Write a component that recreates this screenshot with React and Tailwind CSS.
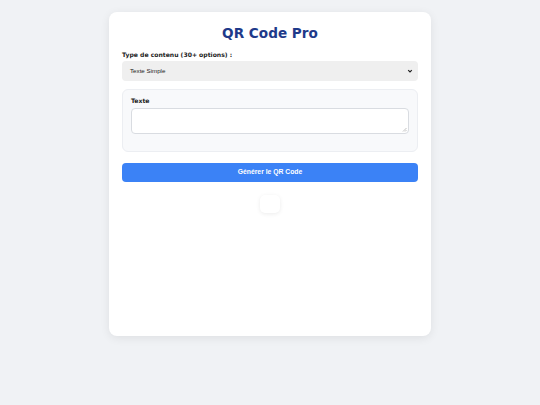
export default function App() {
  return (
    <div className="min-h-[405px] w-full bg-[#f0f2f5] pt-[12px]">
      <div className="mx-auto w-[322px] h-[324px] rounded-[8px] bg-white px-[13px] pt-[11px] shadow-[0_2px_10px_rgba(0,0,0,0.08)]">
        <h1 className="text-center text-[13.6px] leading-[21px] font-bold text-[#1e3a8a] font-['DejaVu_Sans',sans-serif]">QR Code Pro</h1>
        <div className="mt-[6px] text-[6.1px] leading-[9px] font-bold text-[#222] font-['DejaVu_Sans',sans-serif]">Type de contenu (30+ options) :</div>
        <div className="mt-[2px] flex h-[20px] items-center justify-between rounded-[4px] bg-[#efefef] pl-[8px] pr-[5px] text-[6.2px] text-[#222] font-['Liberation_Sans',sans-serif]">
          <span>Texte Simple</span>
          <svg width="6" height="6" viewBox="0 0 10 10"><path d="M2 3.5 L5 6.5 L8 3.5" fill="none" stroke="#222" strokeWidth="2" /></svg>
        </div>
        <div className="mt-[8px] h-[63px] rounded-[6px] border border-[#eceef2] bg-[#f8f9fb] px-[8px] pt-[6px]">
          <div className="text-[6.1px] leading-[9px] font-bold text-[#222] font-['DejaVu_Sans',sans-serif]">Texte</div>
          <div className="relative mt-[3px] h-[26px] rounded-[4px] border border-[#d9dce1] bg-white">
            <svg className="absolute right-[1px] bottom-[1px]" width="5" height="5" viewBox="0 0 5 5"><path d="M4.5 1 L1 4.5 M4.5 3 L3 4.5" stroke="#999" strokeWidth="0.6" /></svg>
          </div>
        </div>
        <div className="mt-[11px] flex h-[19px] items-center justify-center rounded-[4px] bg-[#3b82f6] text-[6.8px] font-bold text-white font-['Liberation_Sans',sans-serif]">Générer le QR Code</div>
        <div className="mx-auto mt-[13px] h-[18px] w-[20px] rounded-[5px] bg-white shadow-[0_1px_4px_rgba(0,0,0,0.08)]"></div>
      </div>
    </div>
  );
}
